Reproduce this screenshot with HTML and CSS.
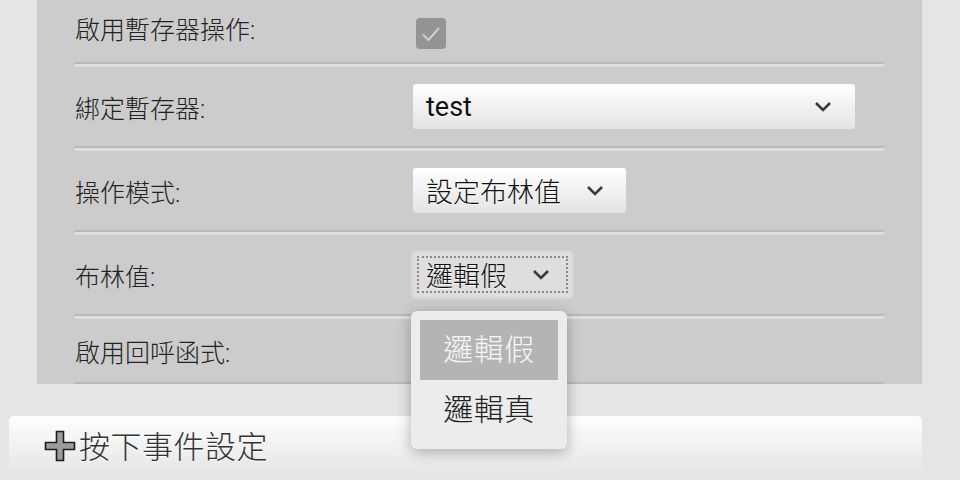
FILE: index.html
```html
<!DOCTYPE html>
<html lang="zh-Hant">
<head>
<meta charset="utf-8">
<title>設定</title>
<link rel="stylesheet" href="styles.css">
</head>
<body>
<div class="panel">
  <div class="row row-check row-first">
    <div class="label">啟用暫存器操作:</div>
    <div class="control"><span class="checkbox"><svg width="30" height="31" viewBox="0 0 30 31"><path d="M7 16.5 L12.5 22 L23 10" fill="none" stroke="#cfcfcf" stroke-width="2"/></svg></span></div>
  </div>
  <div class="row">
    <div class="label">綁定暫存器:</div>
    <div class="control"><div class="select select-wide"><span class="select-text latin">test</span><svg class="chev" width="18" height="11" viewBox="0 0 18 11"><path d="M2 2 L9 9 L16 2" fill="none" stroke="#3a3a3a" stroke-width="2.6"/></svg></div></div>
  </div>
  <div class="row">
    <div class="label">操作模式:</div>
    <div class="control"><div class="select"><span class="select-text">設定布林值</span><svg class="chev" width="18" height="11" viewBox="0 0 18 11"><path d="M2 2 L9 9 L16 2" fill="none" stroke="#3a3a3a" stroke-width="2.6"/></svg></div></div>
  </div>
  <div class="row">
    <div class="label">布林值:</div>
    <div class="control"><div class="select select-focus"><span class="select-text">邏輯假</span><svg class="chev" width="18" height="11" viewBox="0 0 18 11"><path d="M2 2 L9 9 L16 2" fill="none" stroke="#3a3a3a" stroke-width="2.6"/></svg></div></div>
  </div>
  <div class="row row-check">
    <div class="label">啟用回呼函式:</div>
    <div class="control"><span class="checkbox"><svg width="30" height="31" viewBox="0 0 30 31"><path d="M7 16.5 L12.5 22 L23 10" fill="none" stroke="#cfcfcf" stroke-width="2"/></svg></span></div>
  </div>
</div>
<div class="bar">
  <svg class="plus" width="32" height="32" viewBox="0 0 32 32"><path d="M12.5 1.5 H19.5 V12.5 H30.5 V19.5 H19.5 V30.5 H12.5 V19.5 H1.5 V12.5 H12.5 Z" fill="#9b9b9b" stroke="#1c1c1c" stroke-width="1.6"/></svg>
  <span class="bar-text">按下事件設定</span>
</div>
<ul class="menu">
  <li class="menu-item selected">邏輯假</li>
  <li class="menu-item">邏輯真</li>
</ul>
</body>
</html>
```
FILE: styles.css
```css
html, body {
  margin: 0;
  padding: 0;
}
body {
  background: #e5e5e5;
  width: 960px;
  height: 480px;
  overflow: hidden;
  position: relative;
  font-family: Roboto, "Noto Sans CJK TC", sans-serif;
  font-weight: 300;
  color: #2a2a2a;
}
.panel {
  margin: -1px 0 0 37px;
  width: 885px;
  height: 385px;
  box-sizing: border-box;
  padding: 0 38px;
  background: #cccccc;
  overflow: hidden;
}
.row {
  display: flex;
  align-items: center;
  height: 84px;
  box-sizing: border-box;
  border-bottom: 3px solid #dedede;
  box-shadow: inset 0 -2px 0 #b9b9b9;
  padding-bottom: 2px;
}
.row-check {
  height: 68px;
}
.row-first .label {
  margin-top: -5px;
}
.label {
  width: 338px;
  flex: none;
  font-size: 25px;
  color: #222;
}
.control {
  flex: 1;
  display: flex;
  align-items: center;
}
.checkbox {
  display: block;
  width: 30px;
  height: 31px;
  margin: 6px 0 0 3px;
  background: #949494;
  border-radius: 4px;
}
.checkbox svg {
  display: block;
}
.select {
  display: flex;
  align-items: center;
  height: 45px;
  box-sizing: border-box;
  padding: 0 22px 0 13px;
  border-radius: 3px;
  background: linear-gradient(#ffffff, #e3e3e3);
  font-size: 27px;
  color: #111;
  text-shadow: 0 1px 0 #fff;
}
.latin {
  font-weight: 400;
}
.select-wide {
  width: 442px;
  padding-right: 23px;
}
.select-wide .select-text {
  flex: 1;
}
.chev {
  display: block;
  margin-left: 25px;
}
.select-focus {
  background: #dedede;
  box-shadow: 0 0 0 2px #d6d6d6;
  outline: 2px dotted #8a8a8a;
  outline-offset: -6px;
}
.bar {
  margin: 32px 0 0 9px;
  width: 913px;
  height: 56px;
  box-sizing: border-box;
  padding-left: 35px;
  display: flex;
  align-items: center;
  border-radius: 5px;
  background: linear-gradient(#fefefe, #e6e6e6);
}
.plus {
  display: block;
  margin-top: 4px;
}
.bar-text {
  margin-left: 3px;
  font-size: 31px;
  color: #333;
  text-shadow: 0 1px 0 #fff;
  letter-spacing: 0.5px;
}
.menu {
  position: absolute;
  left: 411px;
  top: 311px;
  width: 156px;
  margin: 0;
  padding: 9px;
  box-sizing: border-box;
  list-style: none;
  background: #ececec;
  border-radius: 6px;
  box-shadow: 0 3px 14px rgba(0, 0, 0, 0.3);
}
.menu-item {
  height: 60px;
  line-height: 60px;
  text-align: center;
  font-size: 30px;
  color: #222;
  letter-spacing: 0.5px;
}
.menu-item.selected {
  background: #b4b4b4;
  color: #f6f6f6;
}
```
